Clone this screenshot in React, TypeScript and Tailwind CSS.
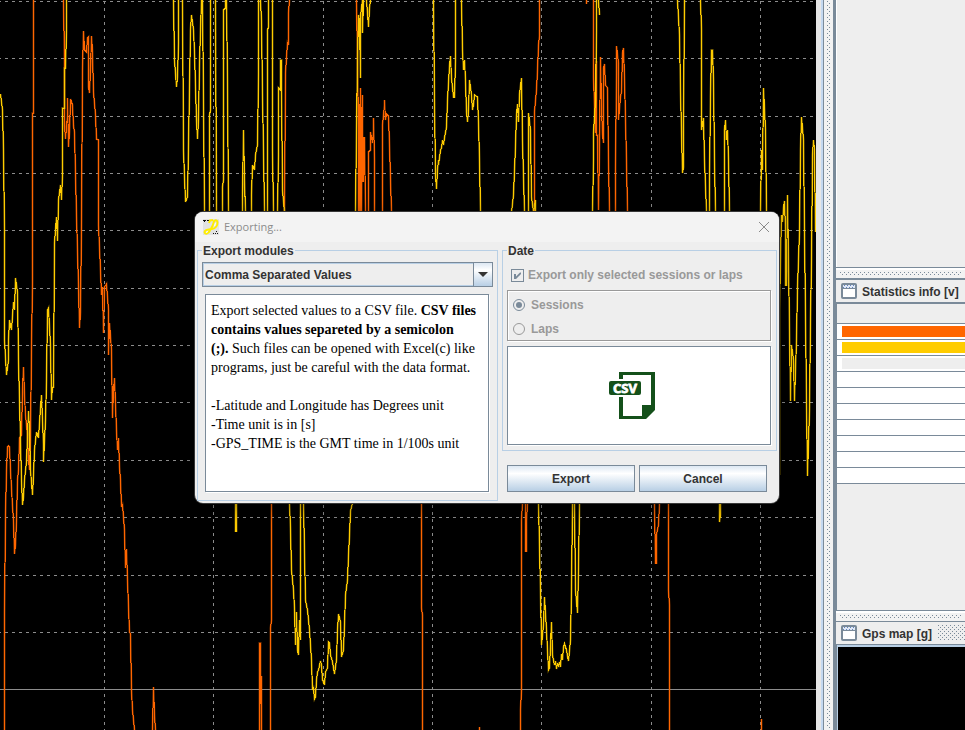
import type { ReactNode } from "react";

const UI_FONT = "font-['Liberation_Sans',Arial,sans-serif]";

const BUMPS =
  "bg-[conic-gradient(at_1px_1px,transparent_75%,#7a8a99_0),conic-gradient(at_1px_1px,transparent_75%,#7a8a99_0)] bg-[size:4px_4px] bg-[position:0_0,2px_2px]";

const GRID_X = [104, 213, 323, 432, 541, 651, 760];
const GRID_Y = [1, 58, 116, 173, 230, 288, 345, 402, 460, 517, 575, 632];

const ORANGE = [
  "4,730 4,612 5,515 6,470 7,447 8,446 9,447 10,470 12,506 13,520 14,554 15,545 16,520 17,480 18,470 19,438 21,435 22,390 23,367 24,395 25,415 27,435 28,460 29,470 30,440 31,345 32,283 32,113 33,113 33,0",
  "63,0 64,60 64,125 65,139 67,115 67,98 68,147 69,132 70,99 72,105 73,126 74,132 76,215 77,250 78,286 79,328 80,312 81,222 82,70 83,31 84,50 86,52 87,38 88,37 88,87 89,93 90,70 91,36 92,52 93,92 95,115 96,139 98,140 98,225 100,270 101,295 102,287 103,333 104,287 106,284 108,310 108,355 109,323 111,350 112,418 113,390 114,378 116,430 117,450 118,438 119,467 120,480 121,507 122,505 124,530 125,568 126,549 127,580 129,632 130,634 131,690 132,710 134,730",
  "152,730 153,687 154,715 155,730",
  "259,730 259,643 260,643 260,676 261,730 261,676",
  "270,730 270,628 271,620 271,503 283,503 284,212 285,73 287,43 288,45 288,13 289,0",
  "356,0 357,60 358,130 358,212 359,104 359,212 360,88 360,212 361,107 361,212 362,95 362,182 363,137 363,182 364,137 365,212",
  "368,212 368,152 370,150 370,132 372,143 373,132 373,118 374,160 374,212",
  "382,212 382,125 384,105 384,100 385,120 386,114 388,116 389,145 391,212",
  "421,503 421,608 422,615 422,730",
  "520,730 520,710 521,690 521,520 522,503",
  "525,503 525,551 526,551 526,521 527,503",
  "534,212 534,112 536,90 537,70 538,45 539,36 539,0",
  "586,0 586,4",
  "593,0 593,77 595,133 596,61 596,135 597,135 598,210 599,145 600,57 601,107 602,134 603,143 603,68 604,64 605,85 607,88 608,160 609,212",
  "615,212 615,167 616,73 616,46 618,63 618,120 620,97 621,92 622,53 623,48 624,78 626,160 627,212",
  "654,503 655,563 656,563 656,534 658,525 659,503",
  "668,503 668,590 669,605 669,730",
  "761,730 761,719",
  "479,730 479,727",
];

const YELLOW = [
  "0,94 2,110 3,150 4,230 4,340 6,375 8,360 8,340 9,320 11,330 13,302 14,310 15,278 17,292 18,360 19,400 21,480 22,505 23,497 24,480 26,462 28,411 29,430 30,470 32,495 33,475 34,450 36,432 38,438 40,408 41,395 43,445 43,462 45,420 46,380 47,310 48,308 50,345 51,400 52,387 53,387 54,243 56,217 57,241 58,200 60,185 61,200 62,175 62,108 64,108 64,68 65,68 66,30 66,0",
  "173,0 174,60 176,87 177,77 178,43 178,0",
  "182,0 183,150 185,202 187,197 188,145 189,87 190,30 191,15 193,30 194,52 196,120 197,139 198,120 199,63 200,30 201,0",
  "202,0 203,100 204,212",
  "209,212 209,115 210,110 210,0",
  "215,0 216,212",
  "222,212 222,187 223,180 223,10 225,8 225,0",
  "226,0 227,80 228,212",
  "235,503 235,531 236,531 236,503",
  "242,212 242,195 243,130 244,180 245,212",
  "251,212 251,195 252,165 254,170 255,155 257,145 258,74 258,0",
  "260,0 261,21 262,95 263,150 264,212",
  "267,212 267,30 268,27 268,0",
  "272,0 272,150 273,212",
  "277,212 278,155 278,88 280,90 280,60 281,60 281,90 282,190 284,212",
  "289,503 290,528 291,570 293,590 294,608 295,645 296,612 297,650 298,655 299,620 300,640 300,503",
  "303,503 305,600 307,610 309,630 311,660 312,690 313,688 314,699 315,697 316,680 317,672 318,670 320,661 321,665 322,680 324,685 325,672 327,668 328,642 329,643 330,655 332,662 334,674 336,660 337,630 338,614 340,622 341,657 343,650 344,625 345,595 347,580 348,555 349,536 350,511 352,503",
  "355,212 356,128 357,60 358,15 359,20 360,78 360,16 362,0 362,33 363,0",
  "366,0 368,27 369,8 370,0",
  "433,0 434,100 435,175 436,189 437,170 438,160 438,165 440,150 441,148 442,140 443,145 444,138 446,127 447,100 449,66 450,56 451,78 453,97 454,97 455,60 455,0",
  "461,0 462,50 463,70 464,60 465,80 466,112 467,122 468,110 469,80 471,95 472,110 473,105 474,95 477,97 478,122 479,160 480,212",
  "511,212 513,195 515,146 516,115 517,104 518,122 519,94 521,78 522,140 524,212",
  "528,212 528,113 530,130 531,197 533,212 535,200 535,212",
  "538,503 540,590 541,645 543,625 544,597 546,630 548,670 549,668 551,622 552,655 554,665 555,661 556,669 557,663 558,667 559,662 560,667 561,654 562,660 563,647 564,644 566,650 567,656 568,661 570,640 571,590 572,503",
  "574,503 575,590 577,613 578,570 579,503",
  "592,212 593,160 593,133 595,100 596,30 596,0",
  "598,0 599,15",
  "677,0 679,35 680,90 682,173 683,167 683,120 684,0",
  "700,0 701,30 701,130 703,118 704,160 706,212",
  "709,212 709,178 710,97 711,50 712,50 713,80 714,160 715,212",
  "719,503 719,522 720,515 720,503",
  "724,212 724,130 725,120 726,140 727,130 728,160 729,212",
  "760,212 761,150 762,170 763,88 765,130 766,212",
  "779,475 779,310 780,260 781,215 782,222 783,208 784,201 785,230 785,285 786,285 787,195 788,260 790,401 791,345 793,360 794,401 796,340 797,287 799,232 800,150 801,117 803,140 804,230 806,400 807,476 809,410 810,320 811,260 812,155 813,140 814,150 815,232",
];

function Traces({ lines, color }: { lines: string[]; color: string }) {
  return (
    <g fill="none" stroke={color} transform="translate(0.5 0)">
      {lines.map((points) => (
        <g key={points}>
          <polyline points={points} strokeWidth="2" opacity="0.45" />
          <polyline points={points} shapeRendering="crispEdges" />
        </g>
      ))}
    </g>
  );
}

function Chart() {
  return (
    <svg
      viewBox="0 0 816 730"
      preserveAspectRatio="xMinYMin slice"
      className="block h-full w-full"
      role="img"
      aria-label="Session telemetry chart"
    >
      <rect width="816" height="730" fill="#000" />
      <g stroke="#8c8c8c" shapeRendering="crispEdges">
        {GRID_Y.map((y) => (
          <line key={y} x1="-2" x2="813" y1={y + 0.5} y2={y + 0.5} strokeDasharray="3 4" />
        ))}
        {GRID_X.map((x) => (
          <line key={x} y1="1" y2="730" x1={x + 0.5} x2={x + 0.5} strokeDasharray="3 4" />
        ))}
        <line x1="0" x2="816" y1="689.5" y2="689.5" />
      </g>
      <Traces lines={ORANGE} color="#ff6600" />
      <Traces lines={YELLOW} color="#ffcc00" />
    </svg>
  );
}

function WindowIcon() {
  return (
    <svg width="16" height="16" viewBox="0 0 16 16" className="shrink-0" aria-hidden="true">
      <rect x="1" y="1" width="14" height="14" rx="1" fill="#fff" stroke="#7a8a99" strokeWidth="2" />
      <rect x="2" y="2" width="12" height="3" fill="#dfe8f5" />
      <path d="M3 2.5h11M2 4.5h11" stroke="#6382bf" strokeDasharray="1 2" />
      <path d="M2 5.5h12" stroke="#7a8a99" />
    </svg>
  );
}

function PanelHeader({ title, className }: { title: string; className: string }) {
  return (
    <div className={`flex items-center border-[#7a8a99] bg-[#eeeeee] pl-[5px] ${className}`}>
      <WindowIcon />
      <h2 className="ml-[5px] shrink-0 pt-0.5 text-[12px] leading-4 font-bold whitespace-nowrap">{title}</h2>
      <span className={`ml-1.5 h-4 flex-1 ${BUMPS}`} />
    </div>
  );
}

function HorizontalDivider() {
  return (
    <div className="border-t border-[#7a8a99]">
      <div className="h-2.5 border-t-2 border-white bg-[#f2f2f2] px-1 py-0.5">
        <div className={`h-1 ${BUMPS}`} />
      </div>
    </div>
  );
}

const STAT_ROWS = ["bg-[#ff6600]", "bg-[#ffcc00]", "bg-[#eeeeee]", "", "", "", "", "", "", ""];

function SidePanels() {
  return (
    <aside className="flex w-[132px] shrink-0 flex-col overflow-hidden border-l-3 border-[#7a8a99] bg-[#eeeeee]">
      <div className="h-[267px] shrink-0 border-l border-white" />
      <HorizontalDivider />
      <section className="flex h-[332px] shrink-0 flex-col">
        <PanelHeader title="Statistics info [v]" className="h-6 border-t-2" />
        <div className="flex-1 border-t-2 border-l border-[#7a8a99]">
          <table className="w-full border-collapse bg-white" aria-label="Statistics info">
            <thead>
              <tr className="h-[19px] border-b border-[#7a8a99] bg-[#eeeeee]">
                <th className="p-0" aria-label="Channel" />
              </tr>
            </thead>
            <tbody>
              {STAT_ROWS.map((fill, i) => (
                <tr key={i} className="h-4 border-b border-[#7a8a99]">
                  <td className="py-0 pr-0 pl-[5px]">
                    <div className={`h-[11px] ${fill}`} />
                  </td>
                </tr>
              ))}
            </tbody>
          </table>
        </div>
      </section>
      <HorizontalDivider />
      <section className="flex min-h-0 flex-1 flex-col">
        <PanelHeader title="Gps map [g]" className="h-[23px] border-t" />
        <div className="flex-1 border-t border-l border-[#7a8a99]">
          <div className="h-full border-t-2 border-l border-[#b8cfe5] bg-black" />
        </div>
      </section>
    </aside>
  );
}

function AppIcon() {
  return (
    <svg width="16" height="16" viewBox="0 0 16 16" aria-hidden="true">
      <rect width="16" height="16" fill="#e2e2e2" />
      <path d="M0 1.5h3M4 1.5h2M1 2.5h1M10 14.5h1M12 14.5h1M14 14.5h1M13 12.5h1" stroke="#111" />
      <path
        d="M6 4L7 1.500L10 1M11.500 1C10.500 5 9.500 8 7 11.500C5.500 14.500 2 16 1.500 13C2.500 10 6 10.500 9 10C13 9.500 14.500 6 14.500 3.500C14.500 1 12.500 1 11.500 2"
        fill="none"
        stroke="#ffee00"
        strokeWidth="2"
      />
      <path d="M3 13.500L5 12.500M12.500 4L11.500 7" stroke="#fff" />
    </svg>
  );
}

function CsvIcon() {
  return (
    <svg width="48" height="48" viewBox="0 0 48 48" role="img" aria-label="CSV file">
      <path d="M10 0H46V38L37 47H10V25H14V44H33V33H42V3H14V7H10Z" fill="#14501a" />
      <rect y="9" width="32" height="14" rx="2" fill="#14501a" />
      <text
        x="16"
        y="21"
        textAnchor="middle"
        fill="#fff"
        stroke="#fff"
        strokeWidth="0.8"
        fontSize="13"
        fontWeight="bold"
        fontFamily="Open Sans, sans-serif"
      >
        CSV
      </text>
    </svg>
  );
}

function Group({ title, className, children }: { title: string; className: string; children: ReactNode }) {
  return (
    <fieldset className={`min-w-0 border border-[#b8cfe5] px-1 ${className}`}>
      <legend className="h-4 px-px text-[12px] leading-[18px] font-bold">{title}</legend>
      {children}
    </fieldset>
  );
}

function MetalButton({ children }: { children: ReactNode }) {
  return (
    <button
      type="button"
      className="h-[27px] flex-1 border border-[#7a8a99] bg-linear-to-b from-[#dde8f3] via-white via-30% to-[#b8cfe5] text-[12px] font-bold"
    >
      {children}
    </button>
  );
}

function ExportDialog() {
  return (
    <div
      role="dialog"
      aria-label="Exporting..."
      className="absolute top-[212px] left-[195px] flex h-[291px] w-[584px] flex-col overflow-hidden rounded-lg bg-[#eeeeee] shadow-[0_0_0_1px_#383838,0_4px_20px_rgba(0,0,0,0.45)]"
    >
      <header className="flex h-[30px] shrink-0 items-center bg-[#f3f3f3] pr-[7px] pl-2">
        <AppIcon />
        <h1 className="ml-[5px] flex-1 font-['Open_Sans',sans-serif] text-[11px] text-[#8c8c8c]">Exporting...</h1>
        <button type="button" aria-label="Close" className="flex size-4 items-center justify-center">
          <svg width="12" height="12" viewBox="0 0 12 12" stroke="#8a8a8a" aria-hidden="true">
            <path d="M1 1L11 11M11 1L1 11" />
          </svg>
        </button>
      </header>
      <div className="flex flex-1 gap-1 pr-0.5 pb-0.5 pl-0.5">
        <Group title="Export modules" className="w-[301px]">
          <div className="relative mt-1">
            <select
              aria-label="Export modules"
              className="block h-[25px] w-full appearance-none border border-[#7a8a99] bg-[#eeeeee] pl-0.5 text-[12px] font-bold shadow-[inset_0_0_0_1px_#b8cfe5]"
            >
              <option>Comma Separated Values</option>
            </select>
            <span className="pointer-events-none absolute top-0 right-0 flex h-[25px] w-5 items-center justify-center border border-[#7a8a99] bg-linear-to-b from-[#dde8f3] via-white via-30% to-[#b8cfe5]">
              <svg width="10" height="5" viewBox="0 0 10 5" aria-hidden="true">
                <path d="M0 0H10L5 5Z" fill="#333" />
              </svg>
            </span>
          </div>
          <div className="mt-[7px] mr-1 ml-[3px] h-[198px] border border-[#7a8a99] bg-white px-[5px] py-1.5 font-['Liberation_Serif','Times_New_Roman',serif] text-[14px] leading-[19px] text-black shadow-[1px_1px_0_#fff]">
            <p>
              Export selected values to a CSV file. <b>CSV files</b>
              <br />
              <b>contains values separeted by a semicolon</b>
              <br />
              <b>(;).</b> Such files can be opened with Excel(c) like
              <br />
              programs, just be careful with the data format.
            </p>
            <p className="mt-[19px]">
              -Latitude and Longitude has Degrees unit
              <br />
              -Time unit is in [s]
              <br />
              -GPS_TIME is the GMT time in 1/100s unit
            </p>
          </div>
        </Group>
        <div className="flex min-w-0 flex-1 flex-col">
          <Group title="Date" className="h-[209px]">
            <label className="mt-[9px] ml-1 flex h-4 items-center text-[12px] font-bold text-[#999999]">
              <span className="relative mr-1 size-[13px]">
                <input
                  type="checkbox"
                  defaultChecked
                  disabled
                  className="block size-[13px] appearance-none border border-[#7a8a99]"
                />
                <svg width="13" height="13" viewBox="0 0 13 13" className="absolute top-0 left-0" aria-hidden="true">
                  <path d="M3 5H5V7.500L9 3.500H10V5L5 10H3Z" fill="#7a8a99" />
                </svg>
              </span>
              Export only selected sessions or laps
            </label>
            <div
              role="radiogroup"
              aria-label="Export scope"
              className="mt-[7px] mr-px flex h-[51px] flex-col gap-2 border border-[#999999] py-1.5 pl-[5px] text-[12px] font-bold text-[#999999] shadow-[1px_1px_0_#fff,inset_1px_1px_0_#fff]"
            >
              <label className="flex h-4 items-center gap-[6px]">
                <input
                  type="radio"
                  name="scope"
                  defaultChecked
                  disabled
                  className="size-3 appearance-none rounded-full border border-[#7a8a99] bg-[#7a8a99] bg-clip-content p-0.5"
                />
                Sessions
              </label>
              <label className="flex h-4 items-center gap-[6px]">
                <input
                  type="radio"
                  name="scope"
                  disabled
                  className="size-3 appearance-none rounded-full border border-[#999999]"
                />
                Laps
              </label>
            </div>
            <div className="mt-[5px] mr-px flex h-[99px] items-center justify-center border border-[#7a8a99] bg-white pr-3 shadow-[1px_1px_0_#fff]">
              <CsvIcon />
            </div>
          </Group>
          <div className="mt-[14px] mr-2.5 ml-[5px] flex gap-1">
            <MetalButton>Export</MetalButton>
            <MetalButton>Cancel</MetalButton>
          </div>
        </div>
      </div>
    </div>
  );
}

export default function App() {
  return (
    <main className={`relative flex h-screen w-full overflow-hidden bg-[#eeeeee] text-[#333333] ${UI_FONT}`}>
      <div className="min-w-0 flex-1 bg-black">
        <Chart />
      </div>
      <div className="flex w-[17px] shrink-0">
        <div className="w-[5px] bg-[#e6e6e6]" />
        <div className="w-0.5 bg-[#c4d8f0]" />
        <div className="w-px bg-[#7a8a99]" />
        <div className="flex-1 bg-[#f2f2f2] py-px pl-[3px]">
          <div className={`h-full w-1 ${BUMPS}`} />
        </div>
      </div>
      <SidePanels />
      <ExportDialog />
    </main>
  );
}
